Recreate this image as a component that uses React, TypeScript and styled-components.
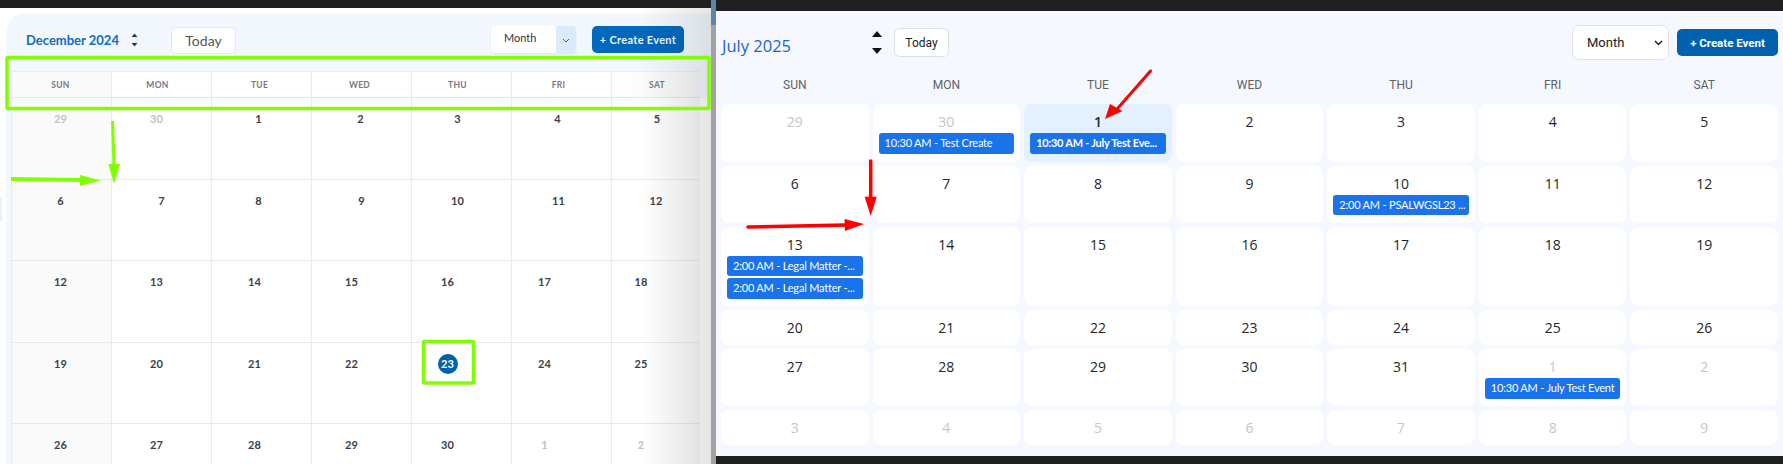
import React from "react";
import styled, { createGlobalStyle } from "styled-components";

const Global = createGlobalStyle`
  html, body { margin: 0; padding: 0; background: #202020; }
  #root { width: 1783px; height: 464px; overflow: hidden; }
`;

const Page = styled.div`
  position: relative;
  width: 1783px;
  height: 464px;
  display: flex;
  align-items: flex-start;
  background: #202020;
  overflow: hidden;
`;

/* ---------- left (older) window ---------- */
const OldWindow = styled.section`
  position: relative;
  box-sizing: border-box;
  width: 711px;
  height: 456px;
  margin-top: 8px;
  padding: 5px 0 0 6px;
  background: #ffffff;
  font-family: Lato, sans-serif;
  flex: none;
  &::before {
    content: "";
    position: absolute;
    left: 0;
    top: 189px;
    width: 2px;
    height: 24px;
    background: #e6f1fb;
  }
  &::after {
    content: "";
    position: absolute;
    right: 0;
    top: 0;
    bottom: 0;
    width: 70px;
    background: linear-gradient(90deg, rgba(0, 0, 0, 0), rgba(0, 0, 0, 0.1));
    pointer-events: none;
  }
`;

const OldPanel = styled.div`
  box-sizing: border-box;
  width: 705px;
  height: 451px;
  padding: 13px 0 0 5px;
  background: linear-gradient(#f2f8fe, #f2f8fe) 0 0 / 100% 85px no-repeat,
    linear-gradient(90deg, #f2f8fe 5px, #fff 5px);
  border-radius: 20px 0 0 0;
  overflow: hidden;
`;

const OldToolbar = styled.header`
  display: flex;
  align-items: flex-start;
  height: 45px;
  padding-left: 15px;
`;

const OldTitle = styled.h2`
  margin: 6px 0 0;
  width: 92px;
  font-size: 13px;
  line-height: 16px;
  font-weight: 700;
  color: #0f6cbd;
  white-space: nowrap;
`;

const OldStepper = styled.span`
  display: block;
  margin: 7px 0 0 13px;
  color: #17406d;
  flex: none;
  line-height: 0;
`;

const OldToday = styled.button`
  box-sizing: border-box;
  width: 65px;
  height: 27px;
  margin: 1px 0 0 33px;
  padding: 0;
  border: 1px solid #e4e7ec;
  border-radius: 4px;
  background: #fff;
  color: #555;
  font: 400 14px Lato, sans-serif;
`;

const OldSelect = styled.div`
  display: flex;
  width: 85px;
  height: 27px;
  margin-left: 255px;
  border-radius: 4px;
  overflow: hidden;
  box-shadow: 0 1px 2px rgba(20, 60, 110, 0.12);
  font-size: 11px;
  color: #333;
`;

const OldSelectLabel = styled.span`
  flex: 1;
  background: #fff;
  padding: 5px 0 0 13px;
`;

const OldSelectCaret = styled.span`
  width: 20px;
  background: #dcebfb;
  color: #2b6cb0;
  display: flex;
  align-items: center;
  justify-content: center;
  padding-top: 2px;
`;

const OldCreate = styled.button`
  box-sizing: border-box;
  width: 92px;
  height: 27px;
  margin-left: 16px;
  padding: 0;
  border: 0;
  border-radius: 5px;
  background: #0068bd;
  color: #eef6fd;
  font: 700 11px Lato, sans-serif;
  letter-spacing: 0.3px;
`;

const OldHead = styled.div`
  display: grid;
  grid-template-columns: repeat(6, 100px) 89px;
  width: 689px;
  height: 27px;
  background: linear-gradient(90deg, #fafafa 100px, #fff 100px, #fff 600px, #f6f6f6);
  border-top: 1px solid #e9edf1;
  border-bottom: 1px solid #e3e6ea;
  box-sizing: border-box;
`;

const OldHeadCell = styled.div`
  display: flex;
  align-items: center;
  justify-content: center;
  border-left: 1px solid #ebebeb;
`;

const OldHeadLabel = styled.span<{ $shift: number }>`
  margin-right: ${(p) => -p.$shift * 2}px;
  font-size: 8.5px;
  font-weight: 700;
  letter-spacing: 0.3px;
  color: #77797f;
`;

const OldBody = styled.div`
  width: 689px;
  background: linear-gradient(90deg, #fafafa 100px, #fff 100px, #fff 640px, #f8f8f8);
`;

const OldRow = styled.div`
  display: grid;
  grid-template-columns: repeat(6, 100px) 89px;
  height: 81.6px;
  box-sizing: border-box;
  border-bottom: 1px solid #e8e8e8;
`;

const OldCell = styled.div`
  border-left: 1px solid #ebebeb;
  display: flex;
  justify-content: center;
  align-items: flex-start;
  padding-top: 14px;
  box-sizing: border-box;
`;

const OldNum = styled.span<{ $muted?: boolean; $shift: number; $today?: boolean }>`
  display: block;
  min-width: ${(p) => (p.$today ? "20px" : "0")};
  height: ${(p) => (p.$today ? "20px" : "14px")};
  margin-top: ${(p) => (p.$today ? "-3px" : "0")};
  margin-right: ${(p) => -p.$shift * 2}px;
  border-radius: 50%;
  text-align: center;
  font-size: 11px;
  line-height: ${(p) => (p.$today ? "20px" : "14px")};
  font-weight: 700;
  color: ${(p) => (p.$today ? "#fff" : p.$muted ? "#bfc1c4" : "#3c4048")};
  background: ${(p) => (p.$today ? "#0060a9" : "transparent")};
`;

const Divider = styled.div`
  flex: none;
  width: 5px;
  height: 464px;
  background: linear-gradient(#5f84a6 25px, #a2a2a2 25px);
`;

/* ---------- right (new) window ---------- */
const NewWindow = styled.section`
  box-sizing: border-box;
  flex: 1;
  height: 445px;
  margin-top: 11px;
  padding: 14px 5px 0 5px;
  background: #f5f8fe;
  font-family: "Open Sans", sans-serif;
`;

const NewToolbar = styled.header`
  display: flex;
  align-items: flex-start;
  height: 52px;
`;

const NewTitle = styled.h2`
  margin: 9px 0 0 1px;
  width: 150px;
  font-size: 16.5px;
  line-height: 24px;
  font-weight: 400;
  color: #1a62d6;
`;

const NewStepper = styled.span`
  display: block;
  margin-top: 6px;
  line-height: 0;
  color: #111;
  flex: none;
`;

const NewToday = styled.button`
  box-sizing: border-box;
  width: 55px;
  height: 29px;
  margin: 3px 0 0 12px;
  padding: 0;
  border: 1px solid #dcdfe4;
  border-radius: 6px;
  background: #fff;
  color: #222;
  font: 400 12px Roboto, sans-serif;
`;

const NewSelect = styled.div`
  box-sizing: border-box;
  display: flex;
  align-items: center;
  justify-content: space-between;
  width: 97px;
  height: 35px;
  margin-left: auto;
  padding: 0 5px 0 14px;
  border: 1px solid #dfe2e6;
  border-radius: 7px;
  background: #fff;
  color: #222;
  font: 400 13px Roboto, sans-serif;
`;

const NewCreate = styled.button`
  box-sizing: border-box;
  width: 101px;
  height: 27px;
  margin: 4px 0 0 8px;
  padding: 0;
  border: 0;
  border-radius: 5px;
  background: #0061ad;
  color: #fff;
  font: 700 11.5px Roboto, sans-serif;
`;

const Weekdays = styled.div`
  display: grid;
  grid-template-columns: repeat(7, 1fr);
  column-gap: 4px;
  height: 27px;
  align-items: center;
  padding-bottom: 11px;
  box-sizing: border-box;
`;

const Weekday = styled.div`
  text-align: center;
  font: 400 12px/16px Roboto, sans-serif;
  color: #5e6166;
`;

const Weeks = styled.div`
  display: flex;
  flex-direction: column;
  gap: 4px;
`;

const Week = styled.div<{ $h: number }>`
  display: grid;
  grid-template-columns: repeat(7, minmax(0, 1fr));
  column-gap: 4px;
  height: ${(p) => p.$h}px;
`;

const Day = styled.div<{ $today?: boolean }>`
  box-sizing: border-box;
  min-width: 0;
  padding: 8px 6px 0;
  border-radius: 8px;
  background: ${(p) => (p.$today ? "#e3f0fd" : "#ffffff")};
  text-align: center;
`;

const DayNum = styled.div<{ $muted?: boolean; $today?: boolean }>`
  font-size: 14px;
  line-height: 20px;
  height: 20px;
  font-weight: ${(p) => (p.$today ? 600 : 400)};
  color: ${(p) => (p.$muted ? "#c4c6c8" : "#23262a")};
`;

const Event = styled.div<{ $bold?: boolean }>`
  box-sizing: border-box;
  height: 20.7px;
  margin-top: 1px;
  margin-bottom: 2px;
  padding: 0 6px;
  border-radius: 3px;
  background: #1a73e8;
  color: #fff;
  text-align: left;
  font-family: Lato, sans-serif;
  font-size: 11px;
  letter-spacing: ${(p) => (p.$bold ? "-0.25px" : "-0.2px")};
  line-height: 20.7px;
  font-weight: ${(p) => (p.$bold ? 700 : 400)};
  white-space: nowrap;
`;

/* ---------- annotation layer ---------- */
const Annotations = styled.svg`
  position: absolute;
  inset: 0;
  width: 1783px;
  height: 464px;
  pointer-events: none;
`;

const OldDays = ["SUN", "MON", "TUE", "WED", "THU", "FRI", "SAT"];
const headShift = [-1, -4, -2, -2, -4, -3, 1];

const wide = [-1, -5, -7, -10, -14, -17, -15];
const oldWeeks: { n: number; m?: boolean; s: number }[][] = [
  [
    { n: 29, m: true, s: -1 },
    { n: 30, m: true, s: -5 },
    { n: 1, s: -3 },
    { n: 2, s: -1 },
    { n: 3, s: -4 },
    { n: 4, s: -4 },
    { n: 5, s: 1 },
  ],
  [
    { n: 6, s: -1 },
    { n: 7, s: 0 },
    { n: 8, s: -3 },
    { n: 9, s: 0 },
    { n: 10, s: -4 },
    { n: 11, s: -3 },
    { n: 12, s: 0 },
  ],
  [12, 13, 14, 15, 16, 17, 18].map((n, i) => ({ n, s: wide[i] })),
  [19, 20, 21, 22, 23, 24, 25].map((n, i) => ({ n, s: wide[i] })),
  [26, 27, 28, 29, 30, 1, 2].map((n, i) => ({ n, m: i > 4, s: wide[i] })),
];

type NewDay = { n: number; m?: boolean; t?: boolean; ev?: string[]; bold?: boolean };
const d = (n: number, ev?: string[]): NewDay => ({ n, ev });
const mut = (n: number, ev?: string[]): NewDay => ({ n, m: true, ev });

const newWeeks: { h: number; days: NewDay[] }[] = [
  {
    h: 57.5,
    days: [
      mut(29),
      mut(30, ["10:30 AM - Test Create"]),
      { n: 1, t: true, bold: true, ev: ["10:30 AM - July Test Eve..."] },
      d(2), d(3), d(4), d(5),
    ],
  },
  {
    h: 57,
    days: [d(6), d(7), d(8), d(9), d(10, ["2:00 AM - PSALWGSL23 ..."]), d(11), d(12)],
  },
  {
    h: 79.5,
    days: [
      d(13, ["2:00 AM - Legal Matter -...", "2:00 AM - Legal Matter -..."]),
      d(14), d(15), d(16), d(17), d(18), d(19),
    ],
  },
  { h: 35, days: [d(20), d(21), d(22), d(23), d(24), d(25), d(26)] },
  {
    h: 57,
    days: [d(27), d(28), d(29), d(30), d(31), mut(1, ["10:30 AM - July Test Event"]), mut(2)],
  },
  { h: 35, days: [mut(3), mut(4), mut(5), mut(6), mut(7), mut(8), mut(9)] },
];

const Stepper = ({ w, gap }: { w: number; gap: number }) => (
  <svg width={w} height={gap + 12} viewBox={`0 0 ${w} ${gap + 12}`}>
    <path d={`M0 6 L${w / 2} 0 L${w} 6 Z`} fill="currentColor" />
    <path d={`M0 ${gap + 6} L${w} ${gap + 6} L${w / 2} ${gap + 12} Z`} fill="currentColor" />
  </svg>
);

export default function App() {
  return (
    <Page>
      <Global />
      <OldWindow>
        <OldPanel>
          <OldToolbar>
            <OldTitle>December 2024</OldTitle>
            <OldStepper>
              <svg width="7" height="14" viewBox="0 0 7 14">
                <path d="M0.5 4 L3.5 0.5 L6.5 4 Z M0.5 10 L6.5 10 L3.5 13.5 Z" fill="currentColor" />
              </svg>
            </OldStepper>
            <OldToday>Today</OldToday>
            <OldSelect>
              <OldSelectLabel>Month</OldSelectLabel>
              <OldSelectCaret>
                <svg width="8" height="5" viewBox="0 0 8 5">
                  <path d="M1 1 L4 4 L7 1" fill="none" stroke="currentColor" strokeWidth="1" />
                </svg>
              </OldSelectCaret>
            </OldSelect>
            <OldCreate>+ Create Event</OldCreate>
          </OldToolbar>
          <OldHead>
            {OldDays.map((x, i) => (
              <OldHeadCell key={x}>
                <OldHeadLabel $shift={headShift[i]}>{x}</OldHeadLabel>
              </OldHeadCell>
            ))}
          </OldHead>
          <OldBody>
            {oldWeeks.map((w, i) => (
              <OldRow key={i}>
                {w.map((c, j) => (
                  <OldCell key={j}>
                    <OldNum $muted={c.m} $shift={c.s} $today={i === 3 && c.n === 23}>
                      {c.n}
                    </OldNum>
                  </OldCell>
                ))}
              </OldRow>
            ))}
          </OldBody>
        </OldPanel>
      </OldWindow>
      <Divider />
      <NewWindow>
        <NewToolbar>
          <NewTitle>July 2025</NewTitle>
          <NewStepper>
            <Stepper w={10} gap={11} />
          </NewStepper>
          <NewToday>Today</NewToday>
          <NewSelect>
            Month
            <svg width="9" height="6" viewBox="0 0 9 6">
              <path d="M1 1 L4.5 4.5 L8 1" fill="none" stroke="#222" strokeWidth="1.5" />
            </svg>
          </NewSelect>
          <NewCreate>+ Create Event</NewCreate>
        </NewToolbar>
        <Weekdays>
          {OldDays.map((x) => (
            <Weekday key={x}>{x}</Weekday>
          ))}
        </Weekdays>
        <Weeks>
          {newWeeks.map((w, i) => (
            <Week key={i} $h={w.h}>
              {w.days.map((c, j) => (
                <Day key={j} $today={c.t}>
                  <DayNum $muted={c.m} $today={c.t}>
                    {c.n}
                  </DayNum>
                  {c.ev?.map((e, k) => (
                    <Event key={k} $bold={c.bold}>
                      {e}
                    </Event>
                  ))}
                </Day>
              ))}
            </Week>
          ))}
        </Weeks>
      </NewWindow>
      <Annotations viewBox="0 0 1783 464">
        <rect x="7" y="57.5" width="702" height="51" fill="none" stroke="#80ff00" strokeWidth="3.5" rx="1" />
        <rect x="423.5" y="341.5" width="50" height="41.5" fill="none" stroke="#80ff00" strokeWidth="3.5" rx="1" />
        <path d="M11 179 L82 180" stroke="#80ff00" strokeWidth="4" />
        <path d="M80 175 L101 180.5 L80 186 Z" fill="#80ff00" />
        <path d="M112.5 121 L114 166" stroke="#80ff00" strokeWidth="3" />
        <path d="M108.5 164 L120 164 L114 184 Z" fill="#80ff00" />
        <path d="M748 227 L846 225" stroke="#ff0000" strokeWidth="3.5" strokeLinecap="round" />
        <path d="M844.5 219 L864 224 L845 231 Z" fill="#ff0000" />
        <path d="M870.7 161 L870.7 201" stroke="#ff0000" strokeWidth="3.5" strokeLinecap="round" />
        <path d="M864.6 196.7 L876.8 196.7 L870.7 216 Z" fill="#ff0000" />
        <path d="M1150.5 71 L1118 108" stroke="#ff0000" strokeWidth="3" strokeLinecap="round" />
        <path d="M1110 104 L1122.5 111 L1105 119 Z" fill="#ff0000" />
      </Annotations>
    </Page>
  );
}
